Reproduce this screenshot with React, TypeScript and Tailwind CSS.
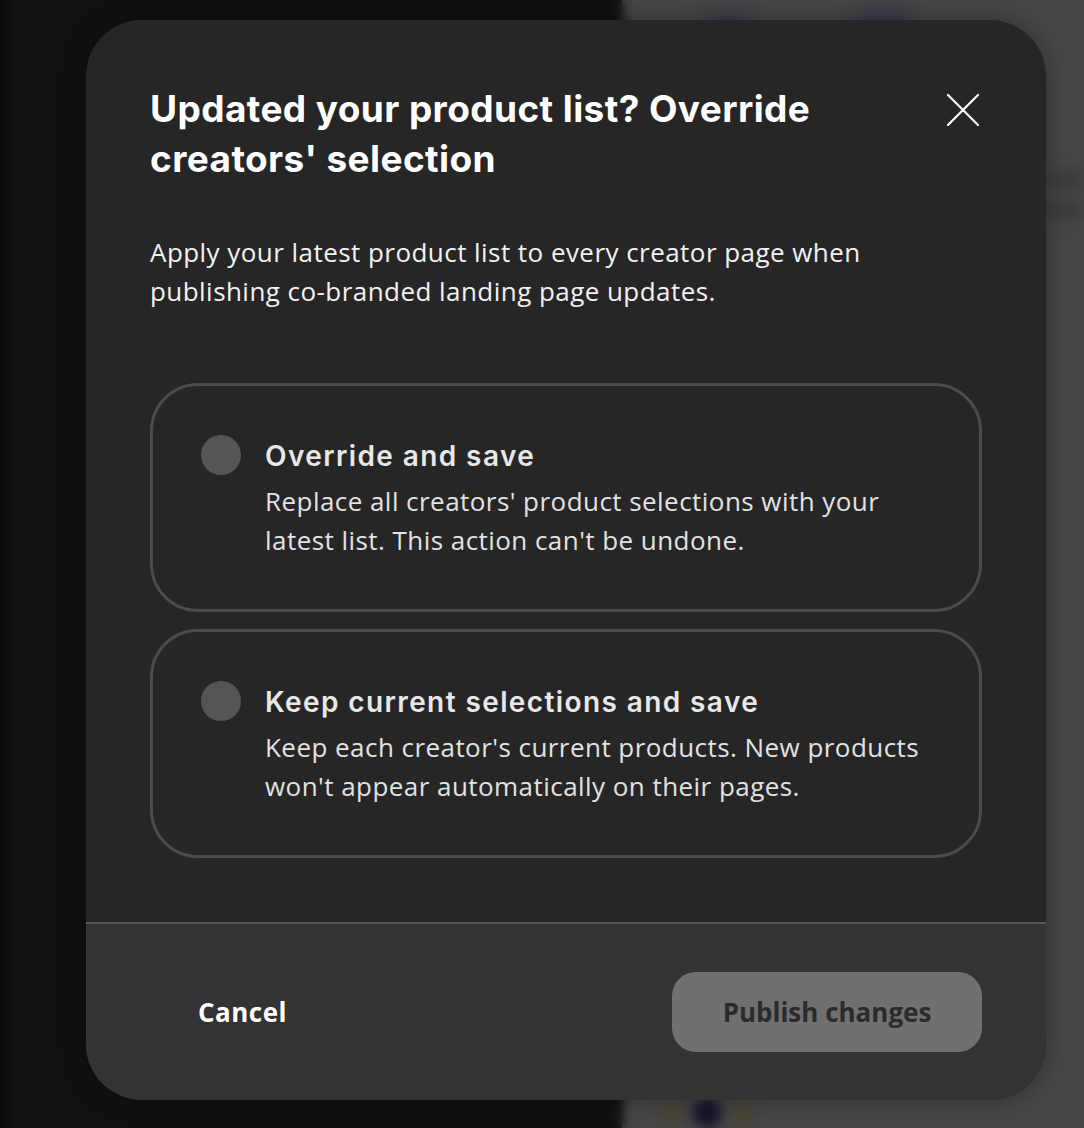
const display = { fontFamily: 'Inter, "Noto Sans", sans-serif' }
const body = { fontFamily: '"Open Sans", "Noto Sans", sans-serif' }

function OptionCard({ title, text }: { title: string; text: string }) {
  return (
    <div className="rounded-[48px] border-[3px] border-[#4b4b4b] pl-12 pr-12 pt-12 pb-[49px]">
      <div className="flex items-start gap-6">
        <span className="mt-[1px] h-10 w-10 shrink-0 rounded-full bg-[#555555]" />
        <div className="max-w-[670px]">
          <div className="text-[28px] font-semibold leading-[44px] tracking-[1.4px] text-[#e8e8e8]" style={display}>
            {title}
          </div>
          <p className="mt-1 text-[26px] leading-[39px] tracking-[0.45px] text-[#e2e2e2]" style={body}>
            {text}
          </p>
        </div>
      </div>
    </div>
  )
}

export default function App() {
  return (
    <div className="relative h-[1128px] w-[1084px] overflow-hidden">
      {/* page behind the dialog */}
      <div className="flex h-full">
        <div className="w-[622px] bg-gradient-to-r from-[#0a0a0a] via-[#111111] via-[3%] to-[#111111]" />
        <div className="relative flex-1 bg-[#474747]">
          <div className="absolute -left-[6px] top-0 h-full w-[14px] bg-gradient-to-r from-[#111111] to-[#474747] blur-[3px]" />
          <div className="absolute left-[80px] top-[8px] h-[30px] w-[50px] rounded-full bg-[#3f3d48] blur-[8px]" />
          <div className="absolute left-[230px] top-[6px] h-[30px] w-[60px] rounded-full bg-[#3e3c4a] blur-[8px]" />
          <div className="absolute left-[40px] top-[1100px] h-[26px] w-[20px] rounded-full bg-[#4a4536] blur-[6px]" />
          <div className="absolute left-[70px] top-[1098px] h-[30px] w-[30px] rounded-full bg-[#16152a] blur-[6px]" />
          <div className="absolute left-[110px] top-[1100px] h-[26px] w-[20px] rounded-full bg-[#4a4536] blur-[6px]" />
          <div className="absolute right-0 top-[170px] h-[20px] w-[40px] bg-[#3d3d3d] blur-[6px]" />
          <div className="absolute right-0 top-[200px] h-[20px] w-[40px] bg-[#3d3d3d] blur-[6px]" />
        </div>
      </div>

      {/* dialog */}
      <div className="absolute left-[86px] top-[20px] flex h-[1080px] w-[960px] flex-col overflow-hidden rounded-[56px] bg-[#262626] shadow-[0_0_24px_rgba(0,0,0,0.35)]">
        <div className="flex-1 pl-16 pr-16 pt-16">
          <div className="flex items-start justify-between">
            <h1 className="max-w-[700px] text-[37px] font-bold leading-[50px] tracking-[0.4px] text-white" style={display}>
              Updated your product list? Override creators' selection
            </h1>
            <button className="mr-[3px] mt-[10px] text-white">
              <svg width="32" height="32" viewBox="0 0 32 32" fill="none" stroke="currentColor" strokeWidth="2.2" strokeLinecap="round">
                <path d="M1 1L31 31M31 1L1 31" />
              </svg>
            </button>
          </div>

          <p className="mt-[49px] max-w-[740px] text-[26px] leading-[39px] tracking-[0.45px] text-[#f2f2f2]" style={body}>
            Apply your latest product list to every creator page when publishing co-branded landing page updates.
          </p>

          <div className="mt-[72px] flex flex-col gap-[17px]">
            <OptionCard
              title="Override and save"
              text="Replace all creators' product selections with your latest list. This action can't be undone."
            />
            <OptionCard
              title="Keep current selections and save"
              text="Keep each creator's current products. New products won't appear automatically on their pages."
            />
          </div>
        </div>

        <div className="flex items-center justify-between border-t-2 border-[#575757] bg-[#333333] py-12 pl-[112px] pr-16">
          <button className="text-[26px] font-bold tracking-[0.5px] text-white" style={body}>
            Cancel
          </button>
          <button
            className="h-20 w-[310px] rounded-[24px] bg-[#707070] text-[26px] font-bold text-[#2b2b2b]"
            style={body}
          >
            Publish changes
          </button>
        </div>
      </div>
    </div>
  )
}
